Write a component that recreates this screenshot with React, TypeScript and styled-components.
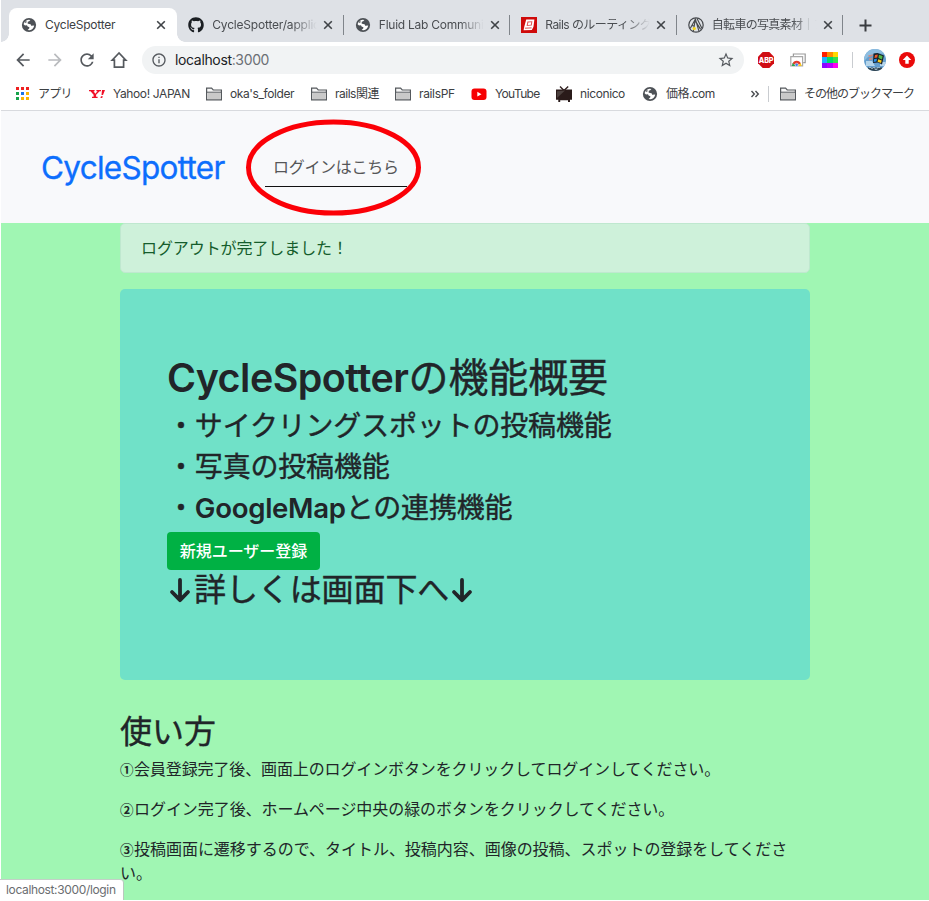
import React from "react";
import styled, { createGlobalStyle } from "styled-components";
import { FaGithub } from "react-icons/fa";
import { MdArrowBack, MdArrowForward, MdRefresh, MdStarBorder, MdInfoOutline } from "react-icons/md";

const GlobalStyle = createGlobalStyle`
  * { box-sizing: border-box; }
  html, body { margin: 0; padding: 0; background: #fff; overflow: hidden; }
  body { font-family: Inter, "Noto Sans CJK JP", sans-serif; color: #212529; }
  h1, h2, h3, p { margin: 0; font-weight: 400; }
  h1, h2, h3 { -webkit-text-stroke: 0.4px #212529; }
  h1 b, h3 b { -webkit-text-stroke: 0; }
  svg { display: block; flex: none; }
`;

const Window = styled.div`
  width: 929px;
  height: 901px;
  padding: 0 0 1px 1px;
  display: flex;
  flex-direction: column;
  overflow: hidden;
  position: relative;
  background: #fff;
`;

const Label = styled.span<{ $ls?: number; $size?: number }>`
  font-size: ${(p) => p.$size ?? 12}px;
  letter-spacing: ${(p) => p.$ls ?? 0}px;
  white-space: nowrap;
  line-height: 18px;
`;

/* ---- tab strip ---- */
const TabStrip = styled.div`
  height: 42px;
  flex: none;
  display: flex;
  align-items: flex-end;
  background: #dee1e6;
  padding-left: 8px;
`;

const Tab = styled.div<{ $active?: boolean }>`
  position: relative;
  height: 34px;
  width: ${(p) => (p.$active ? 168 : 166.5)}px;
  padding: 0 ${(p) => (p.$active ? 8 : 7.5)}px 0 ${(p) => (p.$active ? 12 : 11.3)}px;
  display: flex;
  align-items: center;
  color: ${(p) => (p.$active ? "#3c4043" : "#4a4d51")};
  background: ${(p) => (p.$active ? "#fff" : "transparent")};
  border-radius: 8px 8px 0 0;
  &::before, &::after {
    content: "";
    display: ${(p) => (p.$active ? "block" : "none")};
    position: absolute;
    bottom: 0;
    width: 8px;
    height: 8px;
  }
  &::before { left: -8px; background: radial-gradient(circle at 0 0, transparent 7.5px, #fff 8px); }
  &::after { right: -8px; background: radial-gradient(circle at 100% 0, transparent 7.5px, #fff 8px); }
`;

const TabTitle = styled.div<{ $fade?: boolean }>`
  flex: 1;
  min-width: 0;
  margin-left: 8px;
  white-space: nowrap;
  display: flex;
  mask-image: ${(p) => (p.$fade ? "linear-gradient(to right, #000 74%, transparent 97%)" : "none")};
`;

const CloseBox = styled.div`
  width: 16px;
  flex: none;
  display: flex;
  justify-content: center;
`;

const TabDivider = styled.div`
  width: 1px;
  height: 20px;
  margin: 0 0 7px -1px;
  background: #80858b;
`;

const NewTab = styled.div`
  height: 34px;
  display: flex;
  align-items: center;
  margin-left: 16px;
`;

/* ---- toolbar ---- */
const Toolbar = styled.div`
  height: 36px;
  flex: none;
  display: flex;
  align-items: center;
  padding: 0 13px 0 12px;
  color: #55595e;
`;

const NavButtons = styled.div`
  display: flex;
  align-items: center;
  gap: 12px;
  width: 129px;
`;

const Omnibox = styled.div`
  width: 602px;
  height: 28px;
  border-radius: 14px;
  background: #f1f3f4;
  display: flex;
  align-items: center;
  padding: 0 9px;
`;

const Url = styled.div`
  flex: 1;
  margin: -1px 0 0 8px;
  font-size: 14px;
  letter-spacing: -0.35px;
  color: #6b6f74;
  b { font-weight: 400; color: #202124; }
`;

const Extensions = styled.div`
  flex: 1;
  display: flex;
  align-items: center;
  padding-left: 14px;
`;

const Spacer = styled.div<{ $w: number }>`
  width: ${(p) => p.$w}px;
  flex: none;
`;

const Rule = styled.div<{ $h: number }>`
  width: 1px;
  height: ${(p) => p.$h}px;
  background: #c9ccd0;
`;

/* ---- bookmarks ---- */
const BookmarkBar = styled.div`
  height: 33px;
  flex: none;
  display: flex;
  align-items: center;
  border-bottom: 1px solid #d8dade;
  padding-left: 13px;
  color: #3c4043;
`;

const Bookmark = styled.div<{ $w: number }>`
  width: ${(p) => p.$w}px;
  flex: none;
  display: flex;
  align-items: center;
  gap: 8px;
`;

/* ---- page ---- */
const SiteNav = styled.nav`
  height: 112px;
  flex: none;
  display: flex;
  align-items: center;
  padding-left: 39px;
  background: #f8f9fb;
`;

const Brand = styled.div`
  width: 225px;
  font-size: 31.5px;
  line-height: 48px;
  letter-spacing: -0.72px;
  color: #0d6efd;
  padding: 2px 0 0 1px;
  -webkit-text-stroke: 0.3px #0d6efd;
`;

const LoginLink = styled.div`
  position: relative;
  width: 142px;
  height: 40px;
  border-bottom: 1px solid #111;
  padding: 8px 8px 0;
  font-size: 16px;
  line-height: 24px;
  letter-spacing: -0.3px;
  color: #555658;
  white-space: nowrap;
`;

const Highlight = styled.svg`
  position: absolute;
  left: -20px;
  top: -28px;
`;

const Body = styled.main`
  flex: 1;
  min-height: 0;
  background: #a0f6b3;
  padding: 0 119px;
  overflow: hidden;
`;

const Alert = styled.div`
  height: 50px;
  margin-bottom: 16px;
  border: 1px solid #bfe8cf;
  border-radius: 5px;
  background: #cef1da;
  color: #155d2c;
  padding: 12px 20px;
  font-size: 16px;
  line-height: 24px;
  letter-spacing: -0.08px;
`;

const Hero = styled.section`
  height: 391px;
  border-radius: 5px;
  background: #70e1c8;
  padding: 65px 47px 0;
`;

const HeroTitle = styled.h1`
  font-size: 40px;
  line-height: 48px;
  letter-spacing: -0.1px;
  margin-bottom: 8px;
  white-space: nowrap;
  b { font-size: 39.4px; font-weight: 600; letter-spacing: -0.5px; }
`;

const Feature = styled.h3`
  font-size: 28px;
  line-height: 33px;
  margin-bottom: 8px;
  letter-spacing: -0.18px;
  white-space: nowrap;
  b { font-size: 27.6px; font-weight: 600; letter-spacing: -0.3px; }
`;

const SignUp = styled.button`
  display: block;
  width: 153px;
  height: 38px;
  margin-top: -1px;
  padding: 0;
  border: 0;
  border-radius: 4px;
  background: #00b144;
  color: #fff;
  font: 500 16px/24px Inter, "Noto Sans CJK JP", sans-serif;
`;

const More = styled.h2`
  display: flex;
  align-items: center;
  font-size: 32px;
  line-height: 38px;
  padding-top: 1px;
  letter-spacing: -0.1px;
  white-space: nowrap;
`;

const HowTo = styled.h2`
  margin: 33px 0 6px;
  font-size: 32px;
  line-height: 38px;
`;

const Step = styled.p<{ $ls: number }>`
  margin-bottom: 16px;
  font-size: 16px;
  line-height: 24px;
  letter-spacing: ${(p) => p.$ls}px;
  white-space: nowrap;
`;

const StepNumber = styled.span`
  display: inline-block;
  width: 14px;
  font-family: "Noto Sans CJK JP", sans-serif;
  font-size: 13.5px;
  font-weight: 700;
  line-height: 20px;
  letter-spacing: 0;
`;

const StatusBubble = styled.div`
  position: absolute;
  left: 0;
  bottom: 1px;
  width: 124px;
  height: 21px;
  padding: 0 0 0 6px;
  display: flex;
  align-items: center;
  background: #fff;
  border-top: 1px solid #c4cfc8;
  border-right: 1px solid #b9c8be;
  border-radius: 0 4px 0 0;
  color: #6a6d70;
`;

/* ---- icons ---- */
const Globe = () => (
  <svg width="16" height="16" viewBox="0 0 16 16">
    <circle cx="8" cy="8" r="7.1" fill="#4d5156" />
    <path
      d="M2.6 7.3C3 4.9 5 3 7.6 2.8L9.4 3 8.2 4.2 6.8 4.8 6.6 6.4 8 7.1 9.6 7.3 10.2 8.8 13.2 8.6C12.9 11 11 13 8.6 13.3L6.6 13 8.2 11.6 8.4 10.2 6.6 9.6 6 8.2 4 8.4Z"
      fill="#fff"
    />
    <path d="M3.4 5.2 5.6 3.4 5.2 6Z" fill="#4d5156" />
  </svg>
);

const Close = () => (
  <svg width="10" height="10" viewBox="0 0 10 10" stroke="#3f4347" strokeWidth="1.6">
    <path d="M1.2 1.2 8.8 8.8M8.8 1.2 1.2 8.8" />
  </svg>
);

const RailsGuide = () => (
  <svg width="16" height="16" viewBox="0 0 16 16">
    <path d="M0 0h16v16H0z" fill="#cf0a0a" />
    <path d="M5.2 2.6 13.4 2.4 12.4 10 10.8 13 2.6 13.2 3.2 10Z" fill="#fff" />
    <path d="M6.4 4.4 11.4 4.2 10.8 8.6 5.6 8.9Z" fill="#e05a5a" />
    <path d="M3.9 11.2 10.6 10.9" stroke="#cf0a0a" strokeWidth=".7" />
    <path d="M7.3 5.4 10.2 5.2 9.8 7.7 6.9 7.9Z" fill="#fff" />
  </svg>
);

const PhotoAc = () => (
  <svg width="16" height="16" viewBox="0 0 16 16" fill="none" stroke="#45484c">
    <circle cx="8" cy="8" r="7.2" strokeWidth="1.2" />
    <path d="M2.2 11.5 7.4 2.2 11 14.4M7.4 2.2 5.2 14.6M9 1.6 14 11.6M7.8 4.6l4.8 7.8M3.6 8.8h3" strokeWidth="1.1" />
    <circle cx="6.3" cy="11.6" r="1.7" fill="#f4d51f" stroke="none" />
  </svg>
);

const Home = () => (
  <svg width="20" height="18" viewBox="-1 0 20 18" fill="none" stroke="#55595e" strokeWidth="1.7">
    <path d="M9 2 2.2 9.2H4.4V16.1H13.6V9.2H15.8Z" />
  </svg>
);

const Abp = () => (
  <svg width="16" height="16" viewBox="0 0 16 16">
    <path d="M4.7 0h6.6L16 4.7v6.6L11.3 16H4.7L0 11.3V4.7Z" fill="#d00d14" />
    <text x="8" y="10.7" textAnchor="middle" fontFamily="Inter" fontWeight="800" fontSize="7.2" letterSpacing="-0.2" fill="#fff">ABP</text>
  </svg>
);

const Cast = () => (
  <svg width="16" height="16" viewBox="0 0 16 16">
    <path d="M3.4 4V2h11.8v8.7h-2" fill="none" stroke="#9a9a9a" strokeWidth="1.2" />
    <path d="M.8 4.6h11.8v9.2H.8z" fill="#fff" stroke="#a8a8a8" strokeWidth="1.2" />
    <path d="M2.4 11.6a4.6 4.6 0 0 1 8.6 0l-2.8 1.2h-3Z" fill="#e33b2e" />
    <path d="M1.8 14 2.6 11l3.4 3Z" fill="#2aa44f" />
    <path d="m11.6 14-.8-3-3.4 3Z" fill="#f8c81c" />
    <circle cx="6.7" cy="12.8" r="1.6" fill="#3b7ded" stroke="#fff" strokeWidth=".5" />
  </svg>
);

const swatches = [
  ["#ff1f00", "#ff8a00", "#ffd800"],
  ["#1eb2ff", "#00d86b", "#35e04c"],
  ["#8b08ff", "#b400ff", "#ff00f2"],
];
const Palette = () => (
  <svg width="16" height="16" viewBox="0 0 16 16" shapeRendering="crispEdges">
    {swatches.map((row, y) =>
      row.map((c, x) => <rect key={`${x}${y}`} x={x * 5.34} y={y * 5.34} width="5.4" height="5.4" fill={c} />)
    )}
  </svg>
);

const Avatar = () => (
  <svg width="22" height="22" viewBox="0 0 22 22">
    <defs>
      <clipPath id="avatarClip"><circle cx="11" cy="11" r="11" /></clipPath>
    </defs>
    <g clipPath="url(#avatarClip)">
      <path d="M0 0h22v22H0z" fill="#659fce" />
      <path d="M0 0h22v5L12 4 4 8 0 12Z" fill="#8dbde0" />
      <path d="M2 12h6l3 5H2ZM16 13h6v4h-6Z" fill="#b5d5ea" />
      <path d="M9.5 4.5 13.5 4 20 6.5 18 15.5 14 13.4 9 14Z" fill="#17212a" />
      <path d="M4 6.5 9 5.3 8.5 7 5 8ZM5 9.5l3.5-1-.5 2-3 1Z" fill="#ca8c83" />
      <path d="M11 6 13.8 5.4 13.2 8.6 10.4 9Z" fill="#f05a28" />
      <path d="M15 5.8 18.6 7 18 10.4 14.5 9Z" fill="#52b947" />
      <path d="M10.2 10 13 9.8 12.4 12.6 9.6 13Z" fill="#288ce2" />
      <path d="M14.2 10.2 17.7 11.5 17 14 13.6 12.7Z" fill="#f9cc1c" />
      <path d="M4 18.5h14v3.5H4z" fill="#31434e" />
      <path d="M5 18.5h2l1 1.5 1-1.5h2v2h2v-2h3" fill="none" stroke="#a8c4d4" strokeWidth=".8" />
    </g>
  </svg>
);

const Update = () => (
  <svg width="16" height="16" viewBox="0 0 16 16">
    <circle cx="8" cy="8" r="8" fill="#ea0a0a" />
    <path d="M8 3.6 12.3 8H9.7v3.8H6.3V8H3.7Z" fill="#fff" />
  </svg>
);

const dots = ["#ee2020", "#ee2020", "#ee2020", "#16a34a", "#1a73e8", "#fbb400", "#16a34a", "#fbb400", "#fbb400"];
const Apps = () => (
  <svg width="16" height="16" viewBox="0 0 16 16" shapeRendering="crispEdges">
    {dots.map((c, i) => (
      <rect key={i} x={2 + (i % 3) * 5} y={1 + Math.floor(i / 3) * 5} width="3" height="3" fill={c} />
    ))}
  </svg>
);

const Yahoo = () => (
  <svg width="16" height="16" viewBox="0 0 16 16" fill="#f01027">
    <path d="M0 4h5.6v1.2H4.5L6.3 7.7 8.6 5.2H7.4V4H12v1.2h-1.4L7.1 8.8v2h1.5V12H3v-1.2h1.6v-2L1.5 5.2H0Z" />
    <path d="M13 4h3l-2 5h-1.5ZM12 10.3h1.8L13.2 12h-1.8Z" />
  </svg>
);

const Folder = () => (
  <svg width="16" height="14" viewBox="0 0 16 14">
    <path d="M.6 12.8V1.2h5L7.2 3h8.2v9.8Z" fill="#f7f7f7" stroke="#55595d" strokeWidth="1.2" />
    <path d="M1.4 5.8h13.2V12H1.4Z" fill="#c9c9c9" />
    <path d="M.6 5.2h14.8" stroke="#55595d" strokeWidth="1" />
  </svg>
);

const YouTube = () => (
  <svg width="16" height="16" viewBox="0 0 16 16">
    <rect x="0.5" y="2.5" width="15" height="11.5" rx="3" fill="#f60002" />
    <path d="M6.3 5.8v4.7L10.5 8.2Z" fill="#fff" />
  </svg>
);

const Niconico = () => (
  <svg width="16" height="16" viewBox="0 0 16 16">
    <path d="M4 .6 8 4.5 12.2 .6" fill="none" stroke="#30201f" strokeWidth="1.4" />
    <path d="M0 3.6h16v10.2h-2V16h-2v-1.8H4.2V16H2.3v-2.2H0Z" fill="#2a1b1a" />
    <path d="M1 12V5.2l8-.6Z" fill="#4b403e" />
  </svg>
);

const Arrow = () => (
  <svg width="27" height="32" viewBox="0 0 27 32" fill="none" stroke="#212529" strokeWidth="3.8" strokeLinecap="round" strokeLinejoin="round">
    <path d="M13 6v20M5 18l8 8.2L21 18" />
  </svg>
);

const tabs = [
  { title: "CycleSpotter", icon: <Globe />, active: true, ls: -0.25 },
  { title: "CycleSpotter/applic", icon: <FaGithub size={16} color="#1b1f23" />, ls: -0.2 },
  { title: "Fluid Lab Communi", icon: <Globe />, ls: -0.25 },
  { title: "Rails のルーティング", icon: <RailsGuide />, ls: -0.55 },
  { title: "自転車の写真素材｜フ", icon: <PhotoAc />, ls: -0.7 },
];

const bookmarks = [
  { title: "アプリ", icon: <Apps />, w: 75, ls: -0.7 },
  { title: "Yahoo! JAPAN", icon: <Yahoo />, w: 117, ls: -0.37 },
  { title: "oka's_folder", icon: <Folder />, w: 105, ls: -0.4 },
  { title: "rails関連", icon: <Folder />, w: 84, ls: -0.5 },
  { title: "railsPF", icon: <Folder />, w: 76, ls: -0.35 },
  { title: "YouTube", icon: <YouTube />, w: 85, ls: -0.65 },
  { title: "niconico", icon: <Niconico />, w: 86, ls: -0.4 },
  { title: "価格.com", icon: <Globe />, w: 108, ls: -0.55 },
];

export default function App() {
  return (
    <Window>
      <GlobalStyle />
      <TabStrip>
        {tabs.map((t, i) => (
          <React.Fragment key={i}>
            <Tab $active={t.active}>
              {t.icon}
              <TabTitle $fade={!t.active}><Label $ls={t.ls}>{t.title}</Label></TabTitle>
              <CloseBox><Close /></CloseBox>
            </Tab>
            {i > 0 && <TabDivider />}
          </React.Fragment>
        ))}
        <NewTab>
          <svg width="13" height="13" viewBox="0 0 13 13" stroke="#3a3d41" strokeWidth="2">
            <path d="M6.5 .5v12M.5 6.5h12" />
          </svg>
        </NewTab>
      </TabStrip>

      <Toolbar>
        <NavButtons>
          <MdArrowBack size={20} />
          <MdArrowForward size={20} color="#b9bbbe" />
          <MdRefresh size={20} />
          <Home />
        </NavButtons>
        <Omnibox>
          <MdInfoOutline size={16} />
          <Url><b>localhost</b>:3000</Url>
          <MdStarBorder size={18} />
        </Omnibox>
        <Extensions>
          <Abp />
          <Spacer $w={16} />
          <Cast />
          <Spacer $w={16} />
          <Palette />
          <Spacer $w={14} />
          <Rule $h={16} />
          <Spacer $w={11} />
          <Avatar />
          <Spacer $w={13} />
          <Update />
        </Extensions>
      </Toolbar>

      <BookmarkBar>
        {bookmarks.map((b) => (
          <Bookmark key={b.title} $w={b.w}>
            {b.icon}
            <Label $ls={b.ls}>{b.title}</Label>
          </Bookmark>
        ))}
        <svg width="10" height="8" viewBox="0 0 10 8" fill="none" stroke="#4a4d51" strokeWidth="1.4">
          <path d="M1.5 1 4.3 4 1.5 7M5.5 1 8.3 4 5.5 7" />
        </svg>
        <Spacer $w={8} />
        <Rule $h={16} />
        <Spacer $w={11} />
        <Bookmark $w={140}>
          <Folder />
          <Label $ls={-1}>その他のブックマーク</Label>
        </Bookmark>
      </BookmarkBar>

      <SiteNav>
        <Brand>CycleSpotter</Brand>
        <LoginLink>
          ログインはこちら
          <Highlight width="178" height="98" viewBox="0 0 178 98">
            <ellipse cx="88.5" cy="48.5" rx="85" ry="45.5" fill="none" stroke="#fb0007" strokeWidth="5" />
          </Highlight>
        </LoginLink>
      </SiteNav>

      <Body>
        <Alert>ログアウトが完了しました！</Alert>
        <Hero>
          <HeroTitle><b>CycleSpotter</b>の機能概要</HeroTitle>
          <Feature>・サイクリングスポットの投稿機能</Feature>
          <Feature>・写真の投稿機能</Feature>
          <Feature>・<b>GoogleMap</b>との連携機能</Feature>
          <SignUp>新規ユーザー登録</SignUp>
          <More><Arrow />詳しくは画面下へ<Arrow /></More>
        </Hero>
        <HowTo>使い方</HowTo>
        <Step $ls={-0.12}><StepNumber>①</StepNumber>会員登録完了後、画面上のログインボタンをクリックしてログインしてください。</Step>
        <Step $ls={-0.06}><StepNumber>②</StepNumber>ログイン完了後、ホームページ中央の緑のボタンをクリックしてください。</Step>
        <Step $ls={-0.03}>
          <StepNumber>③</StepNumber>投稿画面に遷移するので、タイトル、投稿内容、画像の投稿、スポットの登録をしてくださ
          <br />
          い。
        </Step>
      </Body>
      <StatusBubble><Label $ls={-0.35}>localhost:3000/login</Label></StatusBubble>
    </Window>
  );
}
